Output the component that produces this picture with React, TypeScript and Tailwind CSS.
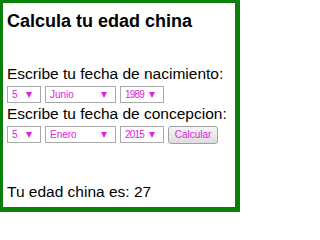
import React from "react";

function Arrow() {
  return (
    <svg
      className="pointer-events-none absolute right-[9px] top-[6px]"
      width="6"
      height="6"
      viewBox="0 0 6 6"
    >
      <path d="M0 0 H6 L3 6 Z" fill="#dd22dd" />
    </svg>
  );
}

function Pick({
  width,
  value,
  options,
  tight = false,
}: {
  width: string;
  value: string;
  options: string[];
  tight?: boolean;
}) {
  return (
    <div className={`relative h-[17px] ${width}`}>
      <select
        defaultValue={value}
        className={`block h-full w-full appearance-none border border-[#a9a9a9] bg-white pl-[4px] text-[10px] leading-[15px] text-[#dd22dd] outline-none ${
          tight ? "tracking-[-0.8px]" : ""
        }`}
      >
        {options.map((o) => (
          <option key={o} value={o}>
            {o}
          </option>
        ))}
      </select>
      <Arrow />
    </div>
  );
}

const days = ["1", "2", "3", "4", "5", "6", "7"];
const months = ["Enero", "Febrero", "Marzo", "Abril", "Mayo", "Junio"];

export default function App() {
  return (
    <div className="box-border h-[212px] w-[240px] border-b-[5px] border-l-[3px] border-r-[5px] border-t-[3px] border-[#0a800a] bg-white pl-[4px] pt-[8px] font-['Liberation_Sans',Arial,sans-serif] text-black">
      <h1 className="text-[18px] font-bold leading-[21px]">Calcula tu edad china</h1>

      <p className="mt-[33px] text-[15.5px] leading-[18px]">Escribe tu fecha de nacimiento:</p>
      <div className="mt-[3px] flex gap-[4px]">
        <Pick width="w-[34px]" value="5" options={days} />
        <Pick width="w-[71px]" value="Junio" options={months} />
        <Pick width="w-[44px]" value="1989" options={["1988", "1989", "1990"]} tight />
      </div>

      <p className="mt-[2px] text-[15.5px] leading-[18px]">Escribe tu fecha de concepcion:</p>
      <div className="mt-[3px] flex items-start gap-[4px]">
        <Pick width="w-[34px]" value="5" options={days} />
        <Pick width="w-[71px]" value="Enero" options={months} />
        <Pick width="w-[44px]" value="2015" options={["2014", "2015", "2016"]} tight />
        <button
          type="button"
          className="block h-[18px] w-[50px] rounded-[3px] border border-[#a0a0a0] bg-gradient-to-b from-[#f6f6f6] to-[#dddddd] text-[10px] leading-[16px] text-[#dd22dd]"
        >
          Calcular
        </button>
      </div>

      <p className="mt-[39px] text-[15.5px] leading-[18px]">Tu edad china es: 27</p>
    </div>
  );
}
